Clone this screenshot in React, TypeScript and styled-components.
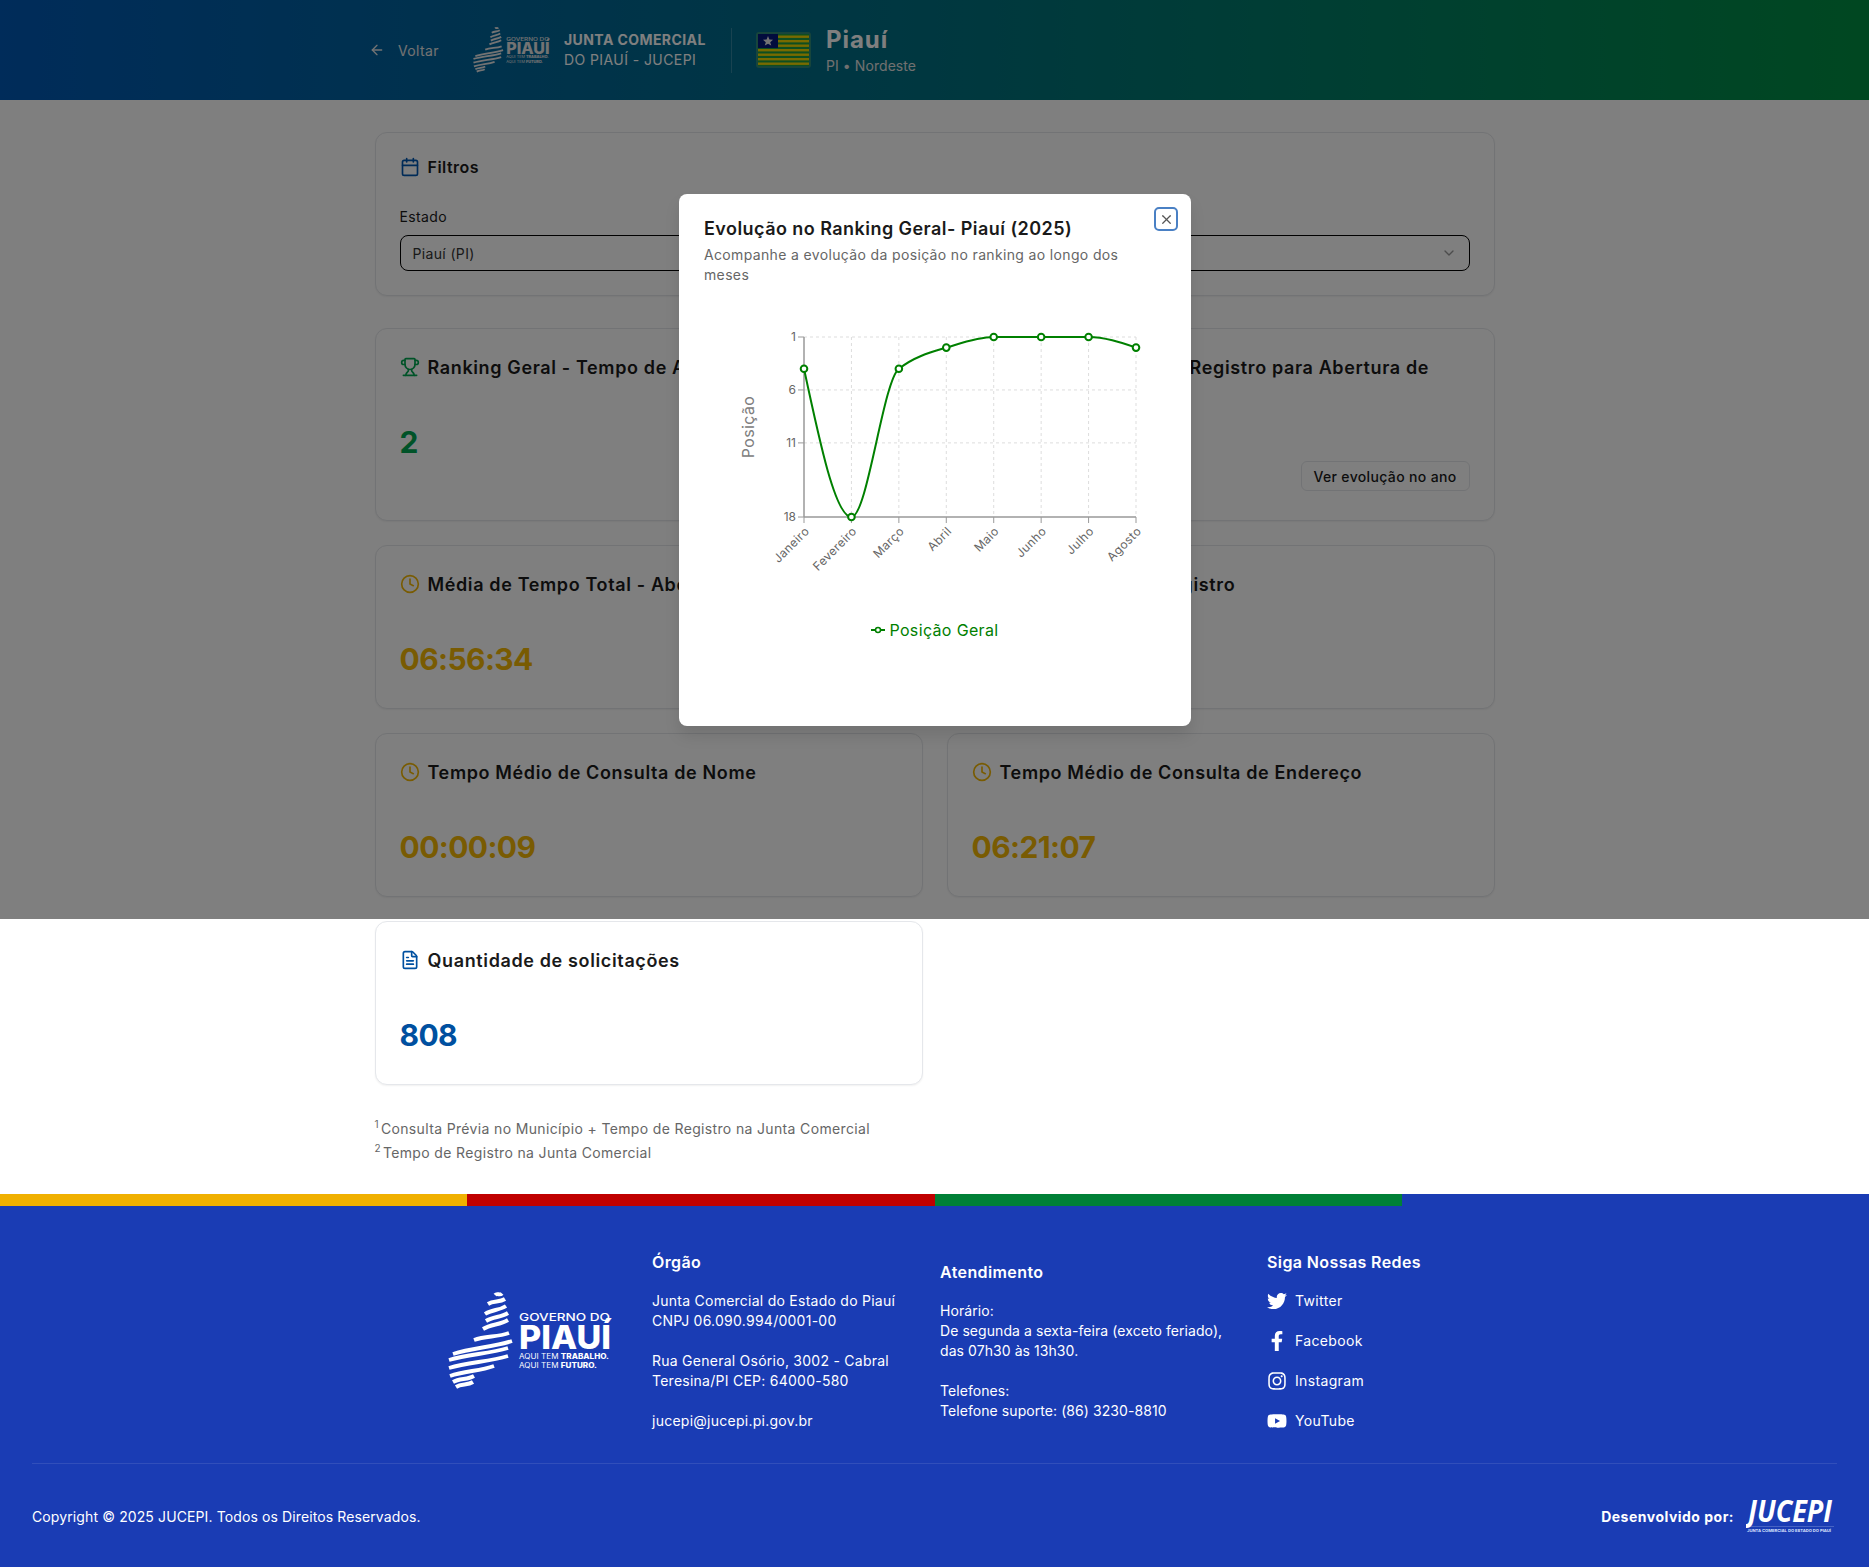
import React from 'react';
import styled, { createGlobalStyle } from 'styled-components';
import { ArrowLeft, Calendar, ChevronDown, Clock, FileText, Trophy, X } from 'lucide-react';
import { FaFacebookF, FaInstagram, FaTwitter, FaYoutube } from 'react-icons/fa';

const GlobalStyle = createGlobalStyle`
  * { box-sizing: border-box; }
  body {
    margin: 0;
    background: #fff;
    color: #1a1a1a;
    font-family: Inter, "Noto Sans", sans-serif;
    font-size: 14px;
    letter-spacing: 0.025em;
  }
`;

const Page = styled.div`
  position: relative;
  width: 100%;
  min-height: 1567px;
`;

const TopBar = styled.header`
  display: flex;
  align-items: center;
  height: 100px;
  padding-left: 369px;
  color: #fff;
  background: linear-gradient(90deg, #0058b4 0%, #006f80 50%, #008f42 100%);
`;

const BackLink = styled.a`
  display: flex;
  align-items: center;
  gap: 13px;
  width: 104px;
  color: #e6e6e6;
  font-size: 14px;
`;

const BrandText = styled.div`
  display: flex;
  flex-direction: column;
  gap: 2px;
  width: 167px;
  margin-left: 14px;
  font-size: 14px;
  line-height: 18px;
  letter-spacing: 0.03em;
  strong { font-weight: 700; }
`;

const Divider = styled.div`
  width: 1px;
  height: 45px;
  margin-right: 24px;
  background: rgba(255, 255, 255, 0.2);
`;

const StateText = styled.div`
  margin-left: 15px;
  h1 {
    margin: 0;
    font-size: 24px;
    line-height: 32px;
    font-weight: 700;
    letter-spacing: 0.04em;
  }
  p {
    margin: 0;
    font-size: 14px;
    line-height: 20px;
    letter-spacing: 0.005em;
    color: #e0e0e0;
  }
`;

const Main = styled.main`
  width: 1120px;
  margin: 0 auto;
  padding: 32px 0 29px;
`;

const Card = styled.section`
  padding: 24px;
  background: #fff;
  border: 1px solid #e5e7eb;
  border-radius: 12px;
  box-shadow: 0 1px 2px rgba(0, 0, 0, 0.06);
`;

const FilterCard = styled(Card)`
  margin-bottom: 32px;
`;

const FilterTitle = styled.div`
  display: flex;
  align-items: center;
  gap: 8px;
  height: 20px;
  font-size: 16px;
  font-weight: 600;
  letter-spacing: 0.03em;
  color: #1a1a1a;
`;

const FieldLabel = styled.label`
  display: block;
  margin: 30px 0 8px;
  font-size: 14px;
  line-height: 20px;
`;

const SelectBox = styled.div`
  display: flex;
  align-items: center;
  justify-content: space-between;
  height: 36px;
  padding: 0 12px;
  border: 1px solid #000;
  border-radius: 8px;
  font-size: 14px;
  color: #333;
  svg { opacity: 0.5; }
`;

const Grid = styled.div`
  display: grid;
  grid-template-columns: repeat(2, 548px);
  gap: 24px;
`;

const CardTitle = styled.div`
  display: flex;
  align-items: flex-start;
  gap: 8px;
  margin-top: 1px;
  font-size: 18px;
  font-weight: 600;
  line-height: 28px;
  letter-spacing: 0.035em;
  color: #1a1a1a;
  svg { flex: none; margin-top: 3px; }
`;

const ValueRow = styled.div`
  display: flex;
  align-items: flex-end;
  justify-content: space-between;
  min-height: 40px;
  margin: 42px 0 3px;
`;

const Value = styled.div<{ $color: string }>`
  align-self: flex-start;
  font-size: 30px;
  line-height: 36px;
  font-weight: 700;
  letter-spacing: -0.02em;
  color: ${(p) => p.$color};
`;

const OutlineButton = styled.button`
  width: 169px;
  height: 30px;
  margin: 9px 0 2px;
  padding: 0;
  background: #fff;
  border: 1px solid #e5e7eb;
  border-radius: 6px;
  font-family: inherit;
  font-size: 14px;
  font-weight: 500;
  letter-spacing: inherit;
  color: #1a1a1a;
`;

const Notes = styled.div`
  margin-top: 32px;
  color: #666;
  font-size: 14px;
  line-height: 24px;
  sup {
    font-size: 10px;
    line-height: 0;
    margin-right: 2px;
  }
`;

const StripeBar = styled.div`
  display: flex;
  height: 12px;
`;

const Stripe = styled.div<{ $color: string }>`
  flex: 1;
  background: ${(p) => p.$color};
`;

const Footer = styled.footer`
  height: 361px;
  background: #1a3cb4;
  color: #fff;
`;

const FooterColumns = styled.div`
  display: flex;
  align-items: center;
  justify-content: center;
  gap: 40px;
  height: 257px;
  padding-top: 45px;
  padding-bottom: 33px;
`;

const LogoSlot = styled.div`
  width: 164px;
  height: 100px;
  margin-top: 3px;
`;

const FooterColumn = styled.div<{ $width: number; $spacing: string }>`
  width: ${(p) => p.$width}px;
  font-size: 14px;
  line-height: 20px;
  letter-spacing: ${(p) => p.$spacing};
  white-space: nowrap;
  h3 {
    margin: 0 0 17px;
    font-size: 16px;
    line-height: 24px;
    font-weight: 600;
    letter-spacing: 0.025em;
  }
`;

const SocialList = styled.div`
  display: flex;
  flex-direction: column;
  gap: 20px;
`;

const SocialLink = styled.a`
  display: flex;
  align-items: center;
  gap: 8px;
  height: 20px;
  color: #fff;
`;

const FooterRule = styled.div`
  height: 1px;
  margin: 0 32px;
  background: rgba(255, 255, 255, 0.1);
`;

const FooterBottom = styled.div`
  display: flex;
  align-items: center;
  justify-content: space-between;
  height: 40px;
  margin-top: 32px;
  padding: 0 35px 0 32px;
`;

const Copyright = styled.span`
  letter-spacing: 0.008em;
`;

const Credit = styled.div`
  display: flex;
  align-items: center;
  gap: 12px;
  font-weight: 700;
  letter-spacing: 0.035em;
`;

const Overlay = styled.div`
  position: absolute;
  top: 0;
  left: 0;
  right: 0;
  height: 919px;
  background: rgba(0, 0, 0, 0.5);
`;

const Dialog = styled.div`
  position: absolute;
  top: 194px;
  left: 50%;
  width: 512px;
  height: 532px;
  margin-left: -255.5px;
  padding: 25px 24px 24px 25px;
  background: #fff;
  border-radius: 8px;
  box-shadow: 0 10px 15px rgba(0, 0, 0, 0.1);
`;

const CloseButton = styled.button`
  position: absolute;
  top: 13px;
  right: 13px;
  display: flex;
  align-items: center;
  justify-content: center;
  width: 24px;
  height: 24px;
  padding: 0;
  background: #fff;
  border: 2px solid #4a80c4;
  border-radius: 5px;
  color: #555;
`;

const DialogTitle = styled.h2`
  margin: 0;
  font-size: 18px;
  line-height: 20px;
  font-weight: 600;
  letter-spacing: 0.025em;
  color: #1a1a1a;
`;

const DialogText = styled.p`
  max-width: 440px;
  margin: 6px 0 0;
  font-size: 14px;
  line-height: 20px;
  color: #666;
`;

const ChartSvg = styled.svg`
  display: block;
  margin: 15px 0 0 -1px;
  font-family: Inter, sans-serif;
`;

const Legend = styled.div`
  display: flex;
  align-items: center;
  justify-content: center;
  gap: 4px;
  margin: -2px 0 0 -1px;
  font-size: 16px;
  line-height: 24px;
  color: #008000;
`;

const months = ['Janeiro', 'Fevereiro', 'Março', 'Abril', 'Maio', 'Junho', 'Julho', 'Agosto'];
const ranks = [4, 18, 4, 2, 1, 1, 1, 2];
const axisX = 101;
const stepX = 47.43;
const rankY = (r: number) => 37 + (r - 1) * 10.59;

// same curve as a monotone line chart
const monotonePath = (pts: [number, number][]): string => {
  const n = pts.length;
  const d: number[] = [];
  const m: number[] = [];
  for (let i = 0; i < n - 1; i++) {
    d.push((pts[i + 1][1] - pts[i][1]) / (pts[i + 1][0] - pts[i][0]));
  }
  for (let i = 1; i < n - 1; i++) {
    m[i] = d[i - 1] * d[i] <= 0 ? 0 : (2 * d[i - 1] * d[i]) / (d[i - 1] + d[i]);
  }
  m[0] = (3 * d[0] - m[1]) / 2;
  m[n - 1] = (3 * d[n - 2] - m[n - 2]) / 2;
  let path = `M${pts[0][0]},${pts[0][1]}`;
  for (let i = 0; i < n - 1; i++) {
    const h = (pts[i + 1][0] - pts[i][0]) / 3;
    path += `C${pts[i][0] + h},${pts[i][1] + m[i] * h} ${pts[i + 1][0] - h},${pts[i + 1][1] - m[i + 1] * h} ${pts[i + 1][0]},${pts[i + 1][1]}`;
  }
  return path;
};

const RankingChart: React.FC = () => {
  const pts = ranks.map((r, i): [number, number] => [axisX + i * stepX, rankY(r)]);
  const right = axisX + 7 * stepX;
  const bottom = rankY(18);
  return (
    <ChartSvg width={464} height={320} viewBox="0 0 464 320">
      {[1, 6, 11].map((r) => (
        <line key={r} x1={axisX} x2={right} y1={rankY(r)} y2={rankY(r)} stroke="#ddd" strokeDasharray="3 3" />
      ))}
      {pts.slice(1).map(([x]) => (
        <line key={x} x1={x} x2={x} y1={rankY(1)} y2={bottom} stroke="#ddd" strokeDasharray="3 3" />
      ))}
      <line x1={axisX} x2={axisX} y1={rankY(1)} y2={bottom} stroke="#999" strokeWidth={1.5} />
      <line x1={axisX} x2={right} y1={bottom} y2={bottom} stroke="#999" strokeWidth={1.5} />
      {[1, 6, 11, 18].map((r) => (
        <g key={r}>
          <line x1={axisX - 6} x2={axisX} y1={rankY(r)} y2={rankY(r)} stroke="#999" />
          <text x={axisX - 8} y={rankY(r) + 4} textAnchor="end" fontSize={12} fill="#666" letterSpacing={0}>
            {r}
          </text>
        </g>
      ))}
      {pts.map(([x], i) => (
        <g key={months[i]}>
          <line x1={x} x2={x} y1={bottom} y2={bottom + 6} stroke="#999" />
          <text
            x={x + 6}
            y={bottom + 15}
            textAnchor="end"
            fontSize={12}
            fill="#666"
            transform={`rotate(-45 ${x + 6} ${bottom + 15})`}
          >
            {months[i]}
          </text>
        </g>
      ))}
      <text x={46} y={127} textAnchor="middle" fontSize={16} fill="#808080" transform="rotate(-90 46 127) translate(0 5)">
        Posição
      </text>
      <path d={monotonePath(pts)} fill="none" stroke="#008000" strokeWidth={2} />
      {pts.map(([x, y]) => (
        <circle key={x} cx={x} cy={y} r={3.3} fill="#fff" stroke="#008000" strokeWidth={2} />
      ))}
    </ChartSvg>
  );
};

const stripes: [number, number, number, number][] = [
  [47, 3, 54, 1.5],
  [40, 12, 57, 7],
  [37, 22, 58, 14],
  [38, 29, 60, 21],
  [35, 37, 60, 28],
  [26, 48, 61, 41],
  [5, 62, 64, 49],
  [1, 68, 60, 56],
  [1, 76, 60, 64],
  [2, 84, 46, 74],
  [5, 90, 26, 84],
  [8, 95, 25, 90],
];

const stripePath = ([a, b, c, d]: [number, number, number, number]) => {
  const w = (c - a) / 3;
  const h = (d - b) / 3;
  return `M${a} ${b}C${a + w} ${b + h - 2} ${a + 2 * w} ${b + 2 * h + 2} ${c} ${d}`;
};

const GovLogo: React.FC<{ width: number; height: number; color: string }> = ({ width, height, color }) => (
  <svg width={width} height={height} viewBox="0 0 164 100" style={{ letterSpacing: 0 }}>
    {stripes.map((s) => (
      <path key={s.join()} d={stripePath(s)} fill="none" stroke={color} strokeWidth={3.9} />
    ))}
    <g fill={color} fontFamily="Inter, sans-serif">
      <text x={71} y={29} fontSize={10.5} fontWeight={500} textLength={91} lengthAdjust="spacingAndGlyphs">GOVERNO DO</text>
      <text x={71} y={57} fontSize={33} fontWeight={800} textLength={92} lengthAdjust="spacingAndGlyphs">PIAUÍ</text>
      <text x={71} y={67} fontSize={7} textLength={90} lengthAdjust="spacingAndGlyphs">
        AQUI TEM <tspan fontWeight={800}>TRABALHO.</tspan>
      </text>
      <text x={71} y={76} fontSize={7} textLength={78} lengthAdjust="spacingAndGlyphs">
        AQUI TEM <tspan fontWeight={800}>FUTURO.</tspan>
      </text>
    </g>
  </svg>
);

const JucepiLogo: React.FC = () => (
  <svg width={88} height={36} viewBox="0 0 88 36" style={{ letterSpacing: 0 }}>
    <text x={2} y={24} fill="#fff" fontFamily="Open Sans, sans-serif" fontStyle="italic" fontWeight={700} fontSize={30} textLength={84} lengthAdjust="spacingAndGlyphs">
      JUCEPI
    </text>
    <line x1={0} x2={88} y1={28.5} y2={28.5} stroke="rgba(255,255,255,0.2)" />
    <text x={1} y={34} fill="#dfe5ff" fontFamily="Inter, sans-serif" fontSize={4} textLength={84} lengthAdjust="spacingAndGlyphs">
      JUNTA COMERCIAL DO ESTADO DO PIAUÍ
    </text>
  </svg>
);

const StateFlag: React.FC = () => (
  <svg width={55} height={36} viewBox="0 0 55 36">
    <rect x={0} y={0} width={55} height={36} rx={3} fill="#2f8a78" />
    <rect x={2} y={2} width={51} height={32} fill="#1f9c40" />
    {[0, 1, 2, 3, 4, 5, 6].map((i) => (
      <rect key={i} x={2} y={3.5 + i * 4.5} width={51} height={2.4} fill="#f2d500" />
    ))}
    <rect x={2} y={2} width={20} height={14} fill="#05187a" />
    <polygon points="12,4 13.4,7.6 17,7.8 14.2,10.2 15.2,13.6 12,11.7 8.8,13.6 9.8,10.2 7,7.8 10.6,7.6" fill="#e8e8e8" />
  </svg>
);

const amber = '#f2b705';

const App: React.FC = () => (
  <Page>
    <GlobalStyle />
    <TopBar>
      <BackLink>
        <ArrowLeft size={16} />
        Voltar
      </BackLink>
      <GovLogo width={77} height={47} color="#e6e6e6" />
      <BrandText>
        <strong>JUNTA COMERCIAL</strong>
        <span>DO PIAUÍ - JUCEPI</span>
      </BrandText>
      <Divider />
      <StateFlag />
      <StateText>
        <h1>Piauí</h1>
        <p>PI • Nordeste</p>
      </StateText>
    </TopBar>

    <Main>
      <FilterCard>
        <FilterTitle>
          <Calendar size={20} color="#0057b0" />
          Filtros
        </FilterTitle>
        <FieldLabel>Estado</FieldLabel>
        <SelectBox>
          Piauí (PI)
          <ChevronDown size={16} />
        </SelectBox>
      </FilterCard>

      <Grid>
        <Card>
          <CardTitle>
            <Trophy size={20} color="#00a650" />
            Ranking Geral - Tempo de Abertura de Empresas
          </CardTitle>
          <ValueRow>
            <Value $color="#00a650">2</Value>
          </ValueRow>
        </Card>
        <Card>
          <CardTitle>
            <Trophy size={20} color="#00a650" />
            <span>Ranking - Tempo de Registro para Abertura de Empresas</span>
          </CardTitle>
          <ValueRow>
            <Value $color="#00a650">1</Value>
            <OutlineButton>Ver evolução no ano</OutlineButton>
          </ValueRow>
        </Card>
        <Card>
          <CardTitle>
            <Clock size={20} color={amber} />
            Média de Tempo Total - Abertura
          </CardTitle>
          <ValueRow>
            <Value $color={amber}>06:56:34</Value>
          </ValueRow>
        </Card>
        <Card>
          <CardTitle>
            <Clock size={20} color={amber} />
            Tempo Médio de Registro
          </CardTitle>
          <ValueRow>
            <Value $color={amber}>00:35:18</Value>
          </ValueRow>
        </Card>
        <Card>
          <CardTitle>
            <Clock size={20} color={amber} />
            Tempo Médio de Consulta de Nome
          </CardTitle>
          <ValueRow>
            <Value $color={amber}>00:00:09</Value>
          </ValueRow>
        </Card>
        <Card>
          <CardTitle>
            <Clock size={20} color={amber} />
            Tempo Médio de Consulta de Endereço
          </CardTitle>
          <ValueRow>
            <Value $color={amber}>06:21:07</Value>
          </ValueRow>
        </Card>
        <Card>
          <CardTitle>
            <FileText size={20} color="#0050a0" />
            Quantidade de solicitações
          </CardTitle>
          <ValueRow>
            <Value $color="#0050a0">808</Value>
          </ValueRow>
        </Card>
      </Grid>

      <Notes>
        <div>
          <sup>1</sup>Consulta Prévia no Município + Tempo de Registro na Junta Comercial
        </div>
        <div>
          <sup>2</sup>Tempo de Registro na Junta Comercial
        </div>
      </Notes>
    </Main>

    <StripeBar>
      <Stripe $color="#f0b000" />
      <Stripe $color="#c00000" />
      <Stripe $color="#008037" />
      <Stripe $color="#1a3cb4" />
    </StripeBar>

    <Footer>
      <FooterColumns>
        <LogoSlot>
          <GovLogo width={164} height={100} color="#fff" />
        </LogoSlot>
        <FooterColumn $width={248} $spacing="0.018em">
          <h3>Órgão</h3>
          Junta Comercial do Estado do Piauí
          <br />
          CNPJ 06.090.994/0001-00
          <br />
          <br />
          Rua General Osório, 3002 - Cabral
          <br />
          Teresina/PI CEP: 64000-580
          <br />
          <br />
          jucepi@jucepi.pi.gov.br
        </FooterColumn>
        <FooterColumn $width={287} $spacing="0.005em">
          <h3>Atendimento</h3>
          Horário:
          <br />
          De segunda a sexta-feira (exceto feriado),
          <br />
          das 07h30 às 13h30.
          <br />
          <br />
          Telefones:
          <br />
          Telefone suporte: (86) 3230-8810
        </FooterColumn>
        <FooterColumn $width={154} $spacing="0.025em">
          <h3>Siga Nossas Redes</h3>
          <SocialList>
            <SocialLink>
              <FaTwitter size={20} />
              Twitter
            </SocialLink>
            <SocialLink>
              <FaFacebookF size={20} />
              Facebook
            </SocialLink>
            <SocialLink>
              <FaInstagram size={20} />
              Instagram
            </SocialLink>
            <SocialLink>
              <FaYoutube size={20} />
              YouTube
            </SocialLink>
          </SocialList>
        </FooterColumn>
      </FooterColumns>
      <FooterRule />
      <FooterBottom>
        <Copyright>Copyright © 2025 JUCEPI. Todos os Direitos Reservados.</Copyright>
        <Credit>
          Desenvolvido por:
          <JucepiLogo />
        </Credit>
      </FooterBottom>
    </Footer>

    <Overlay>
      <Dialog>
        <CloseButton>
          <X size={15} />
        </CloseButton>
        <DialogTitle>Evolução no Ranking Geral- Piauí (2025)</DialogTitle>
        <DialogText>Acompanhe a evolução da posição no ranking ao longo dos meses</DialogText>
        <RankingChart />
        <Legend>
          <svg width={14} height={10} viewBox="0 0 14 10">
            <line x1={0} x2={14} y1={5} y2={5} stroke="#008000" strokeWidth={2} />
            <circle cx={7} cy={5} r={2.5} fill="#fff" stroke="#008000" strokeWidth={1.5} />
          </svg>
          Posição Geral
        </Legend>
      </Dialog>
    </Overlay>
  </Page>
);

export default App;
